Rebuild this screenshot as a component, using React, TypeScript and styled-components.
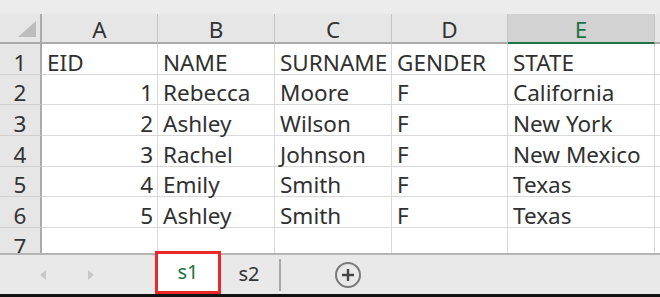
import React from "react";
import styled, { createGlobalStyle } from "styled-components";

const GlobalStyle = createGlobalStyle`
  html, body {
    margin: 0;
    padding: 0;
    background: #ffffff;
    overflow: hidden;
  }
  body {
    font-family: "Noto Sans", "Open Sans", Arial, sans-serif;
  }
`;

const COLS = [42, 116, 117, 117, 116, 147, 40];
const ROW_H = 30.67;

const Window = styled.div`
  width: 660px;
  height: 297px;
  display: flex;
  flex-direction: column;
  background: #e9e9e9;
  overflow: hidden;
`;

const TopStrip = styled.div`
  height: 14px;
  flex: none;
  background: #ececec;
`;

const Sheet = styled.div`
  height: 239px;
  flex: none;
  overflow: hidden;
  display: grid;
  grid-template-columns: ${COLS.map((c) => `${c}px`).join(" ")};
  grid-template-rows: 30px repeat(7, ${ROW_H}px);
  background: #ffffff;
  color: #303030;
  font-size: 22.5px;
`;

const Cell = styled.div<{ $align?: "left" | "right" }>`
  box-sizing: border-box;
  border-right: 1px solid #d9d9d9;
  border-bottom: 1px solid #d9d9d9;
  display: flex;
  align-items: flex-end;
  justify-content: ${(p) => (p.$align === "right" ? "flex-end" : "flex-start")};
  padding: 0 4px 0 5px;
  line-height: 23px;
  white-space: nowrap;
`;

const RowHead = styled.div`
  box-sizing: border-box;
  background: #e6e6e6;
  border-right: 2px solid #ababab;
  border-bottom: 1px solid #d0d0d0;
  display: flex;
  align-items: flex-end;
  justify-content: center;
  line-height: 23px;
  color: #333;
`;

const ColHead = styled.div<{ $active?: boolean }>`
  box-sizing: border-box;
  background: ${(p) => (p.$active ? "#d2d2d2" : "#e6e6e6")};
  border-right: 1px solid #c4c4c4;
  border-bottom: 2px solid ${(p) => (p.$active ? "#217346" : "#ababab")};
  color: ${(p) => (p.$active ? "#217346" : "#333")};
  display: flex;
  align-items: flex-end;
  justify-content: center;
  line-height: 23px;
  padding-bottom: 1px;
`;

const Corner = styled.div`
  box-sizing: border-box;
  background: #e6e6e6;
  border-right: 2px solid #ababab;
  border-bottom: 2px solid #ababab;
  display: flex;
  align-items: flex-end;
  justify-content: flex-end;
  padding: 0 4px 5px 0;
`;

const TabBar = styled.div`
  flex: 1;
  display: flex;
  align-items: stretch;
  border-top: 2px solid #b4b4b4;
  border-bottom: 3px solid #111;
  background: #e9e9e9;
`;

const Arrows = styled.div`
  width: 155px;
  display: flex;
  align-items: center;
  padding-left: 40px;
  gap: 42px;
  box-sizing: border-box;
`;

const Tab = styled.div<{ $active?: boolean }>`
  display: flex;
  align-items: center;
  justify-content: center;
  box-sizing: border-box;
  width: ${(p) => (p.$active ? "66px" : "56px")};
  margin-top: ${(p) => (p.$active ? "-4px" : "0")};
  background: ${(p) => (p.$active ? "#ffffff" : "transparent")};
  border: ${(p) => (p.$active ? "3px solid #e8282b" : "none")};
  color: ${(p) => (p.$active ? "#217346" : "#333")};
  font-size: 20px;
  padding-bottom: 2px;
`;

const Divider = styled.div`
  width: 2px;
  margin: 4px 0 3px 2px;
  background: #a8a8a8;
`;

const AddButton = styled.div`
  display: flex;
  align-items: center;
  margin-left: 53px;
`;

const head = ["A", "B", "C", "D", "E", ""];
const rows: (string | number)[][] = [
  ["EID", "NAME", "SURNAME", "GENDER", "STATE"],
  [1, "Rebecca", "Moore", "F", "California"],
  [2, "Ashley", "Wilson", "F", "New York"],
  [3, "Rachel", "Johnson", "F", "New Mexico"],
  [4, "Emily", "Smith", "F", "Texas"],
  [5, "Ashley", "Smith", "F", "Texas"],
  ["", "", "", "", ""],
];

const App = () => (
  <Window>
    <GlobalStyle />
    <TopStrip />
    <Sheet>
      <Corner>
        <svg width="18" height="16" viewBox="0 0 18 16">
          <polygon points="18,0 18,16 0,16" fill="#bdbdbd" />
        </svg>
      </Corner>
      {head.map((h, i) => (
        <ColHead key={i} $active={h === "E"}>
          {h}
        </ColHead>
      ))}
      {rows.map((r, ri) => (
        <React.Fragment key={ri}>
          <RowHead>{ri + 1}</RowHead>
          {r.map((v, ci) => (
            <Cell key={ci} $align={typeof v === "number" ? "right" : "left"}>
              {v}
            </Cell>
          ))}
          <Cell />
        </React.Fragment>
      ))}
    </Sheet>
    <TabBar>
      <Arrows>
        <svg width="6" height="10" viewBox="0 0 6 10">
          <polygon points="6,0 6,10 0,5" fill="#c8c8c8" />
        </svg>
        <svg width="6" height="10" viewBox="0 0 6 10">
          <polygon points="0,0 0,10 6,5" fill="#c8c8c8" />
        </svg>
      </Arrows>
      <Tab $active>s1</Tab>
      <Tab>s2</Tab>
      <Divider />
      <AddButton>
        <svg width="28" height="28" viewBox="0 0 28 28">
          <circle cx="14" cy="14" r="12" fill="none" stroke="#7a7a7a" strokeWidth="2" />
          <path d="M14 8v12M8 14h12" stroke="#444" strokeWidth="2.4" />
        </svg>
      </AddButton>
    </TabBar>
  </Window>
);

export default App;
